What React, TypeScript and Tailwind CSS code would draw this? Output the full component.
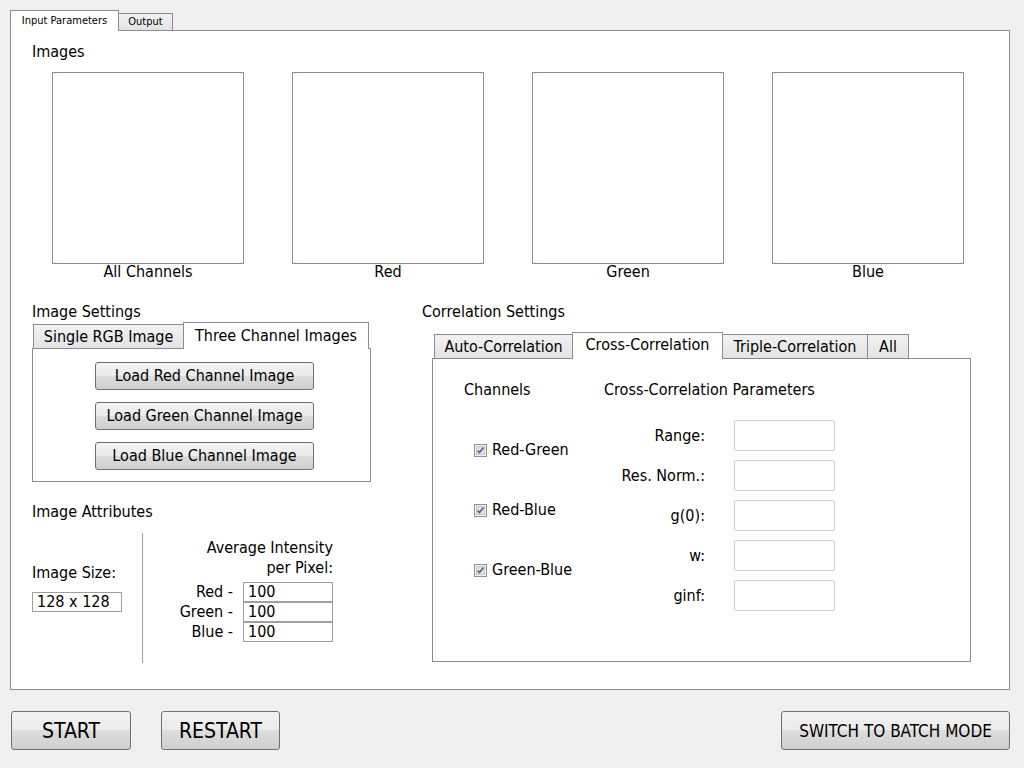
import React from "react";

const btn =
  "border border-[#707070] rounded-[3px] bg-[linear-gradient(to_bottom,#f2f2f2_0%,#ebebeb_50%,#dddddd_50%,#cfcfcf_100%)] text-black flex items-center justify-center";
const tabOff =
  "border border-[#898c95] border-b-0 bg-[linear-gradient(to_bottom,#f2f2f2,#e3e3e3)] flex items-center justify-center";
const tabOn = "border border-[#898c95] border-b-0 bg-white flex items-center justify-center relative z-10";

function Check() {
  return (
    <svg width="13" height="13" viewBox="0 0 13 13" className="shrink-0">
      <rect x="0.5" y="0.5" width="12" height="12" fill="#f4f4f4" stroke="#8e8f8f" />
      <rect x="2.5" y="2.5" width="8" height="8" fill="#e2e2e2" stroke="#c6c6c6" />
      <path d="M3.5 6.5 L5.5 8.5 L9.5 3.5" fill="none" stroke="#4a5f97" strokeWidth="1.6" />
    </svg>
  );
}

const images = ["All Channels", "Red", "Green", "Blue"];
const channels = ["Red-Green", "Red-Blue", "Green-Blue"];
const params = ["Range:", "Res. Norm.:", "g(0):", "w:", "ginf:"];
const intensity = ["Red -", "Green -", "Blue -"];

export default function App() {
  return (
    <div className="w-[1024px] h-[768px] bg-[#f0f0f0] text-[#000] font-['DejaVu_Sans_Condensed','DejaVu_Sans',sans-serif] text-[16px] leading-[20px] px-[10px] pt-[10px]">
      {/* Top tabs */}
      <div className="flex items-end h-[20px] text-[11px]">
        <div className={tabOn + " w-[109px] h-[21px] -mb-px"}>Input Parameters</div>
        <div className={tabOff + " w-[55px] h-[17px] -ml-px"}>Output</div>
      </div>

      {/* Main panel */}
      <div className="w-[1000px] h-[660px] border border-[#898c95] bg-white pl-[21px] pt-[11px]">
        <div>Images</div>
        <div className="flex gap-[48px] ml-[20px] mt-[10px]">
          {images.map((name) => (
            <div key={name} className="w-[192px] flex flex-col items-center">
              <div className="w-[192px] h-[192px] border border-[#898c95]" />
              <div className="-mt-[2px]">{name}</div>
            </div>
          ))}
        </div>

        <div className="flex mt-[20px]">
          {/* Left column */}
          <div className="w-[339px]">
            <div>Image Settings</div>
            <div className="flex items-end h-[26px] pl-px">
              <div className={tabOff + " w-[151px] h-[24px]"}>Single RGB Image</div>
              <div className={tabOn + " w-[186px] h-[27px] -ml-px -mb-px"}>Three Channel Images</div>
            </div>
            <div className="w-[339px] h-[134px] border border-[#898c95] pt-[13px] flex flex-col items-center gap-[12px] pl-[6px]">
              {["Load Red Channel Image", "Load Green Channel Image", "Load Blue Channel Image"].map((t) => (
                <div key={t} className={btn + " w-[219px] h-[28px]"}>
                  {t}
                </div>
              ))}
            </div>

            <div className="mt-[20px]">Image Attributes</div>
            <div className="flex mt-[11px] h-[130px]">
              <div className="w-[110px] pt-[30px]">
                <div>Image Size:</div>
                <div className="mt-[9px] w-[90px] h-[20px] border border-[#a0a0a0] pl-[4px] leading-[18px]">128 x 128</div>
              </div>
              <div className="w-px h-[130px] bg-[#a0a0a0]" />
              <div className="w-[190px] flex flex-col items-end pt-[5px]">
                <div className="text-right leading-[20px]">
                  Average Intensity
                  <br />
                  per Pixel:
                </div>
                <div className="flex flex-col mt-[4px]">
                  {intensity.map((l) => (
                    <div key={l} className="flex items-center justify-end h-[20px]">
                      <span className="mr-[10px]">{l}</span>
                      <div className="w-[90px] h-[20px] border border-[#a0a0a0] pl-[4px] leading-[18px]">100</div>
                    </div>
                  ))}
                </div>
              </div>
            </div>
          </div>

          {/* Right column */}
          <div className="ml-[51px] w-[549px]">
            <div>Correlation Settings</div>
            <div className="flex items-end h-[26px] mt-[10px] pl-[12px]">
              <div className={tabOff + " w-[139px] h-[24px]"}>Auto-Correlation</div>
              <div className={tabOn + " w-[151px] h-[27px] -ml-px -mb-px pb-[3px]"}>Cross-Correlation</div>
              <div className={tabOff + " w-[146px] h-[24px] -ml-px"}>Triple-Correlation</div>
              <div className={tabOff + " w-[42px] h-[24px] -ml-px"}>All</div>
            </div>
            <div className="ml-[10px] w-[539px] h-[304px] border border-[#898c95] pt-[21px] pl-[31px] flex">
              <div className="w-[140px]">
                <div>Channels</div>
                <div className="mt-[20px] pl-[10px]">
                  {channels.map((c) => (
                    <div key={c} className="flex items-center gap-[5px] h-[60px]">
                      <Check />
                      <span>{c}</span>
                    </div>
                  ))}
                </div>
              </div>
              <div>
                <div>Cross-Correlation Parameters</div>
                <div className="mt-[20px] flex flex-col gap-[9px]">
                  {params.map((p) => (
                    <div key={p} className="flex items-center h-[31px]">
                      <span className="w-[101px] text-right">{p}</span>
                      <div className="ml-[29px] w-[101px] h-[31px] border border-[#d0d0d0] rounded-[2px]" />
                    </div>
                  ))}
                </div>
              </div>
            </div>
          </div>
        </div>
      </div>

      {/* Bottom buttons */}
      <div className="flex mt-[21px] pl-px">
        <div className={btn + " w-[120px] h-[39px] text-[21px]"}>START</div>
        <div className={btn + " w-[119px] h-[39px] text-[21px] ml-[30px]"}>RESTART</div>
        <div className={btn + " w-[229px] h-[39px] text-[17px] ml-auto mr-[4px]"}>SWITCH TO BATCH MODE</div>
      </div>
    </div>
  );
}
